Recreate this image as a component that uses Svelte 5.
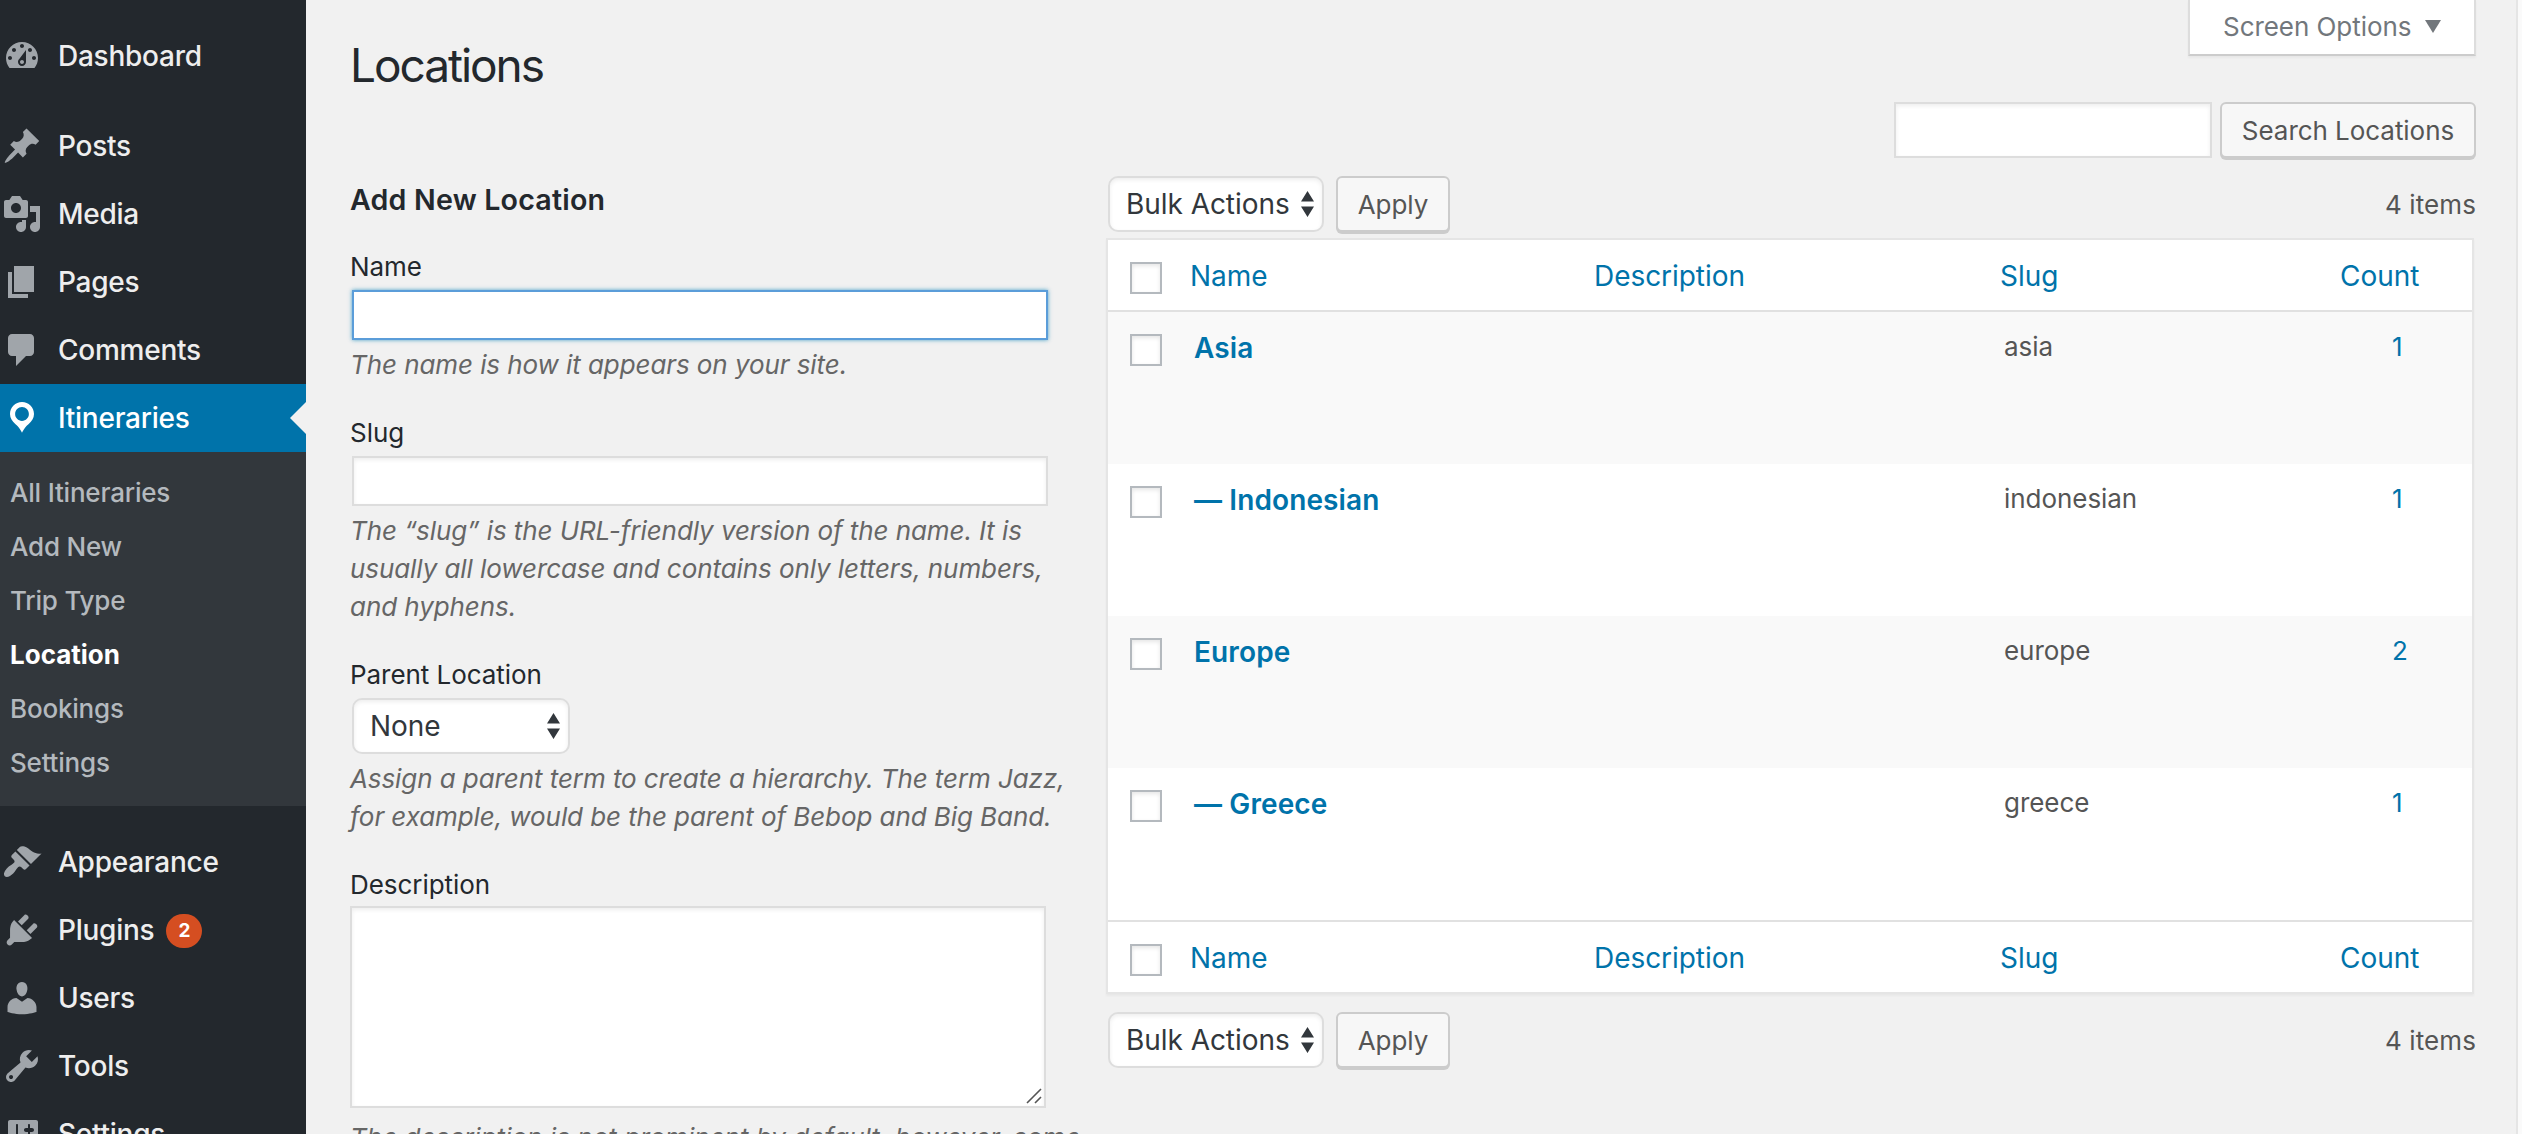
<script>
  const icons = {
    dashboard: 'M3.76 16h12.48c1.1-1.37 1.76-3.11 1.76-5 0-4.42-3.58-8-8-8s-8 3.58-8 8c0 1.89.66 3.63 1.76 5zM10 4c.55 0 1 .45 1 1s-.45 1-1 1-1-.45-1-1 .45-1 1-1zM6 6c.55 0 1 .45 1 1s-.45 1-1 1-1-.45-1-1 .45-1 1-1zm8 0c.55 0 1 .45 1 1s-.45 1-1 1-1-.45-1-1 .45-1 1-1zm-5.37 5.55L12 7v6c0 1.1-.9 2-2 2s-2-.9-2-2c0-.57.24-1.08.63-1.45zM4 10c.55 0 1 .45 1 1s-.45 1-1 1-1-.45-1-1 .45-1 1-1zm12 0c.55 0 1 .45 1 1s-.45 1-1 1-1-.45-1-1 .45-1 1-1zm-5 3c0-.55-.45-1-1-1s-1 .45-1 1 .45 1 1 1 1-.45 1-1z',
    post: 'M10.44 3.02l1.82-1.82 6.36 6.35-1.83 1.82c-1.05-.68-2.48-.57-3.41.36l-.75.75c-.92.93-1.04 2.35-.35 3.41l-1.83 1.82-2.41-2.41-2.8 2.79c-.42.42-3.38 2.71-3.8 2.29s1.86-3.39 2.28-3.81l2.79-2.79L4.1 9.36l1.83-1.82c1.05.69 2.48.57 3.4-.36l.75-.75c.93-.92 1.05-2.35.36-3.41z',
    media: 'M13 11V4c0-.55-.45-1-1-1h-1.67L9 1H5L3.67 3H2c-.55 0-1 .45-1 1v7c0 .55.45 1 1 1h10c.55 0 1-.45 1-1zM7 4.5c1.38 0 2.5 1.12 2.5 2.5S8.38 9.5 7 9.5 4.5 8.38 4.5 7 5.62 4.5 7 4.5zM14 6h5v10.5c0 1.38-1.12 2.5-2.5 2.5S14 17.88 14 16.5s1.12-2.5 2.5-2.5c.17 0 .34.02.5.05V9h-3V6zm-4 8.05V13h2v3.5c0 1.38-1.12 2.5-2.5 2.5S7 17.88 7 16.5 8.12 14 9.5 14c.17 0 .34.02.5.05z',
    page: 'M6 15V2h10v13H6zm-1 1h8v2H3V5h2v11z',
    comments: 'M5 2h9c1.1 0 2 .9 2 2v7c0 1.1-.9 2-2 2h-2l-5 5v-5H5c-1.1 0-2-.9-2-2V4c0-1.1.9-2 2-2z',
    location: 'M10 2C6.69 2 4 4.69 4 8c0 2.02 1.17 3.71 2.53 4.89.43.37 1.18.96 1.85 1.83.74.97 1.41 2.01 1.62 2.71.21-.7.88-1.74 1.62-2.71.67-.87 1.42-1.46 1.85-1.83C14.83 11.71 16 10.02 16 8c0-3.31-2.69-6-6-6zm0 2.56c1.9 0 3.44 1.54 3.44 3.44S11.9 11.44 10 11.44 6.56 9.9 6.56 8 8.1 4.56 10 4.56z',
    appearance: 'M14.48 11.06L7.41 3.99l1.5-1.5c.5-.56 2.3-.47 3.51.32 1.21.8 1.43 1.28 2.91 2.1 1.18.64 2.45 1.26 4.45.85zm-.71.71L6.7 4.7 4.93 6.47c-.39.39-.39 1.02 0 1.41l1.06 1.06c.39.39.39 1.03 0 1.42-.6.6-1.43 1.11-2.21 1.69-.35.26-.7.53-1.01.84C1.43 14.23.4 16.08 1.4 17.07c.99 1 2.84-.03 4.18-1.36.31-.31.58-.66.85-1.02.57-.78 1.08-1.61 1.69-2.21.39-.39 1.02-.39 1.41 0l1.06 1.06c.39.39 1.02.39 1.41 0z',
    plugins: 'M13.11 4.36L9.87 7.6 8 5.73l3.24-3.24c.35-.34 1.05-.2 1.56.32.52.51.66 1.21.31 1.55zm-8 1.77l.91-1.12 9.01 9.01-1.19.84c-.71.71-2.63 1.16-3.82 1.16H6.14L4.9 17.26c-.59.59-1.54.59-2.12 0-.59-.58-.59-1.53 0-2.12l1.24-1.24v-3.88c0-1.13.4-3.19 1.09-3.89zm7.26 3.97l3.24-3.24c.34-.35 1.04-.21 1.55.31.52.51.66 1.21.31 1.55l-3.24 3.25z',
    users: 'M10 9.25c-2.27 0-2.73-3.44-2.73-3.44C7 4.02 7.82 2 9.97 2c2.16 0 2.98 2.02 2.71 3.81 0 0-.41 3.44-2.68 3.44zm0 2.57L12.72 10c2.39 0 4.52 2.33 4.52 4.53v2.49s-3.65 1.13-7.24 1.13c-3.65 0-7.24-1.13-7.24-1.13v-2.49c0-2.25 1.94-4.48 4.47-4.48z',
    tools: 'M16.68 9.77c-1.34 1.34-3.3 1.67-4.95.99l-5.41 6.52c-.99.99-2.59.99-3.58 0s-.99-2.59 0-3.57l6.52-5.42c-.68-1.65-.35-3.61.99-4.95 1.28-1.28 3.12-1.62 4.72-1.06l-2.89 2.89 2.82 2.82 2.86-2.87c.53 1.58.18 3.39-1.08 4.65zM3.81 16.21c.4.39 1.04.39 1.43 0 .4-.4.4-1.04 0-1.43-.39-.4-1.03-.4-1.43 0-.39.39-.39 1.03 0 1.43z',
    settings: 'M18 16V4c0-.55-.45-1-1-1H4c-.55 0-1 .45-1 1v12c0 .55.45 1 1 1h13c.55 0 1-.45 1-1zM8 11h1c.55 0 1 .45 1 1s-.45 1-1 1H8v1.5c0 .28-.22.5-.5.5s-.5-.22-.5-.5V13H6c-.55 0-1-.45-1-1s.45-1 1-1h1V5.5c0-.28.22-.5.5-.5s.5.22.5.5V11zm6-2v5.5c0 .28-.22.5-.5.5s-.5-.22-.5-.5V9h-1c-.55 0-1-.45-1-1s.45-1 1-1h1V5.5c0-.28.22-.5.5-.5s.5.22.5.5V7h1c.55 0 1 .45 1 1s-.45 1-1 1h-1z'
  };

  const menu = [
    { label: 'Dashboard', icon: 'dashboard', gapAfter: true },
    { label: 'Posts', icon: 'post' },
    { label: 'Media', icon: 'media' },
    { label: 'Pages', icon: 'page' },
    { label: 'Comments', icon: 'comments' },
    {
      label: 'Itineraries',
      icon: 'location',
      current: true,
      gapAfter: true,
      children: ['All Itineraries', 'Add New', 'Trip Type', 'Location', 'Bookings', 'Settings']
    },
    { label: 'Appearance', icon: 'appearance' },
    { label: 'Plugins', icon: 'plugins', badge: 2 },
    { label: 'Users', icon: 'users' },
    { label: 'Tools', icon: 'tools' },
    { label: 'Settings', icon: 'settings' }
  ];

  const terms = [
    { name: 'Asia', slug: 'asia', count: 1 },
    { name: '— Indonesian', slug: 'indonesian', count: 1 },
    { name: 'Europe', slug: 'europe', count: 2 },
    { name: '— Greece', slug: 'greece', count: 1 }
  ];
</script>

{#snippet arrows()}
  <svg class="arrows" viewBox="0 0 13 26" aria-hidden="true">
    <path d="M6.5 0L13 10.5H0zM6.5 26L0 15.5h13z" />
  </svg>
{/snippet}

{#snippet tablenav()}
  <div class="tablenav">
    <div class="select bulk"><span>Bulk Actions</span>{@render arrows()}</div>
    <button class="button apply">Apply</button>
    <span class="items">4 items</span>
  </div>
{/snippet}

{#snippet headings()}
  <div class="row head">
    <div class="cell check"><span class="box"></span></div>
    <div class="cell"><a href="#name">Name</a></div>
    <div class="cell"><a href="#description">Description</a></div>
    <div class="cell"><a href="#slug">Slug</a></div>
    <div class="cell count"><a href="#count">Count</a></div>
  </div>
{/snippet}

<div class="admin">
  <nav class="sidebar">
    {#each menu as item}
      <a class="item" class:current={item.current} href="#menu">
        <svg class="icon" viewBox="0 0 20 20" aria-hidden="true"><path fill-rule="evenodd" d={icons[item.icon]} /></svg>
        <span>{item.label}</span>
        {#if item.badge}<span class="badge">{item.badge}</span>{/if}
      </a>
      {#if item.children}
        <div class="submenu">
          {#each item.children as child}
            <a class:active={child === 'Location'} href="#submenu">{child}</a>
          {/each}
        </div>
      {/if}
      {#if item.gapAfter}<div class="separator"></div>{/if}
    {/each}
  </nav>

  <main>
    <header>
      <h1>Locations</h1>
      <div class="tools">
        <button class="screen-options"><span>Screen Options</span>
          <svg viewBox="0 0 16 13" aria-hidden="true"><path d="M0 0h16L8 13z" /></svg>
        </button>
        <div class="search">
          <input type="text" aria-label="Search Locations" />
          <button class="button">Search Locations</button>
        </div>
      </div>
    </header>

    <div class="columns">
      <section class="form">
        <h2>Add New Location</h2>
        <div class="field first">
          <label for="tag-name">Name</label>
          <input id="tag-name" class="focused" type="text" />
          <p>The name is how it appears on your site.</p>
        </div>
        <div class="field">
          <label for="tag-slug">Slug</label>
          <input id="tag-slug" type="text" />
          <p>The “slug” is the URL-friendly version of the name. It is<br />usually all lowercase and contains only letters, numbers,<br />and hyphens.</p>
        </div>
        <div class="field parent">
          <span class="label">Parent Location</span>
          <div class="select"><span>None</span>{@render arrows()}</div>
          <p>Assign a parent term to create a hierarchy. The term Jazz,<br />for example, would be the parent of Bebop and Big Band.</p>
        </div>
        <div class="field description">
          <span class="label">Description</span>
          <div class="textarea">
            <svg viewBox="0 0 16 16" aria-hidden="true"><path d="M1 15L15 1M9 15l6-6" /></svg>
          </div>
          <p>The description is not prominent by default; however, some</p>
        </div>
      </section>

      <section class="list">
        {@render tablenav()}
        <div class="table">
          {@render headings()}
          <div class="body">
            {#each terms as term}
              <div class="row term">
                <div class="cell check"><span class="box"></span></div>
                <div class="cell name"><a href="#term">{term.name}</a></div>
                <div class="cell"></div>
                <div class="cell slug">{term.slug}</div>
                <div class="cell posts"><a href="#posts">{term.count}</a></div>
              </div>
            {/each}
          </div>
          {@render headings()}
        </div>
        {@render tablenav()}
      </section>
    </div>
  </main>
  <div class="edge"></div>
</div>

<style>
  :global(body) {
    margin: 0;
    overflow: hidden;
  }

  .admin {
    display: flex;
    width: 2522px;
    height: 1134px;
    overflow: hidden;
    background: #f1f1f1;
    color: #555;
    font-family: Inter, 'Liberation Sans', sans-serif;
    font-size: 26px;
    font-weight: 400;
    line-height: 38px;
    letter-spacing: -0.05px;
  }

  .admin * {
    box-sizing: border-box;
  }

  a {
    color: #0073aa;
    text-decoration: none;
  }

  /* Sidebar */
  .sidebar {
    flex: none;
    width: 306px;
    padding-top: 22px;
    background: #23282d;
    font-weight: 450;
    letter-spacing: -0.2px;
  }

  .item {
    position: relative;
    display: flex;
    align-items: center;
    height: 68px;
    padding-left: 2px;
    color: #eee;
    font-size: 28px;
    letter-spacing: -0.25px;
  }

  .icon {
    flex: none;
    width: 40px;
    height: 40px;
    margin-right: 16px;
    fill: #a0a5aa;
  }

  .item.current {
    background: #0073aa;
    color: #fff;
  }

  .item.current .icon {
    fill: #fff;
  }

  .item.current::after {
    content: '';
    position: absolute;
    right: 0;
    top: 18px;
    border: 16px solid transparent;
    border-left-width: 0;
    border-right-color: #f1f1f1;
  }

  .badge {
    display: flex;
    align-items: center;
    justify-content: center;
    width: 36px;
    height: 34px;
    margin: 2px 0 0 12px;
    border-radius: 17px;
    background: #d54e21;
    color: #fff;
    font-size: 19px;
    font-weight: 700;
  }

  .separator {
    height: 22px;
  }

  .submenu {
    display: flex;
    flex-direction: column;
    height: 354px;
    padding: 14px 0 0 10px;
    background: #32373c;
  }

  .submenu a {
    height: 54px;
    color: #b4b9be;
    line-height: 54px;
  }

  .submenu .active {
    color: #fff;
    font-weight: 650;
    letter-spacing: 0;
  }

  /* Page header */
  main {
    flex: none;
    width: 2170px;
    padding-left: 44px;
  }

  header {
    display: flex;
    justify-content: space-between;
    height: 176px;
  }

  h1 {
    margin: 0;
    padding-top: 35px;
    color: #23282d;
    font-size: 46px;
    font-weight: 400;
    line-height: 60px;
    letter-spacing: -2.05px;
  }

  .tools {
    display: flex;
    flex-direction: column;
    align-items: flex-end;
  }

  .screen-options {
    display: flex;
    align-items: center;
    width: 288px;
    height: 56px;
    padding: 0 0 0 33px;
    border: 2px solid #ddd;
    border-top: 0;
    border-bottom-color: #ccc;
    background: #fff;
    box-shadow: 0 2px 2px rgba(0, 0, 0, 0.04);
    color: #72777c;
    font: inherit;
    letter-spacing: inherit;
  }

  .screen-options svg {
    width: 16px;
    height: 13px;
    margin: -2px 0 0 14px;
    fill: #72777c;
  }

  .search {
    display: flex;
    gap: 8px;
    margin-top: 46px;
  }

  input {
    display: block;
    width: 318px;
    height: 56px;
    padding: 0 10px;
    border: 2px solid #ddd;
    border-radius: 0;
    outline: 0;
    background: #fff;
    box-shadow: inset 0 2px 4px rgba(0, 0, 0, 0.07);
  }

  .button {
    width: 256px;
    height: 56px;
    padding: 1px 0 0;
    border: 2px solid #ccc;
    border-radius: 6px;
    background: #f7f7f7;
    box-shadow: 0 2px 0 #ccc;
    color: #555;
    font: inherit;
    letter-spacing: inherit;
  }

  .columns {
    display: flex;
  }

  /* Add form */
  .form {
    flex: none;
    width: 756px;
  }

  h2 {
    margin: 0;
    padding-top: 5px;
    color: #23282d;
    font-size: 28.6px;
    font-weight: 600;
    line-height: 38px;
    letter-spacing: 0.2px;
  }

  .field {
    display: flex;
    flex-direction: column;
    margin-top: 30px;
  }

  .field.first {
    margin-top: 29px;
  }

  label,
  .label {
    height: 42px;
    color: #23282d;
  }

  .description .label {
    height: 40px;
  }

  .field input {
    width: 696px;
    height: 50px;
    margin-left: 2px;
  }

  .field input.focused {
    border-color: #5b9dd9;
    box-shadow: 0 0 4px rgba(30, 140, 190, 0.8);
  }

  .field p {
    margin: 6px 0 0;
    color: #666;
    font-style: italic;
    font-weight: 450;
    letter-spacing: -0.08px;
    white-space: nowrap;
  }

  .field.description p {
    margin-top: 11px;
    letter-spacing: 0.02px;
  }

  .select {
    display: flex;
    align-items: center;
    justify-content: space-between;
    width: 218px;
    height: 56px;
    margin-left: 2px;
    padding: 0 8px 0 16px;
    border: 2px solid #ddd;
    border-radius: 10px;
    background: #fff;
    box-shadow: inset 0 2px 4px rgba(0, 0, 0, 0.07);
    color: #32373c;
    font-size: 28px;
    letter-spacing: -0.05px;
  }

  .arrows {
    width: 13px;
    height: 26px;
    fill: #32373c;
  }

  .textarea {
    display: flex;
    align-items: flex-end;
    justify-content: flex-end;
    width: 696px;
    height: 202px;
    padding: 2px;
    border: 2px solid #ddd;
    background: #fff;
    box-shadow: inset 0 2px 4px rgba(0, 0, 0, 0.07);
  }

  .textarea svg {
    width: 16px;
    height: 16px;
    fill: none;
    stroke: #555;
    stroke-width: 1.6;
  }

  /* Term list */
  .list {
    width: 1370px;
  }

  .tablenav {
    display: flex;
    align-items: flex-start;
    height: 62px;
  }

  .tablenav .select {
    width: 216px;
    margin-right: 12px;
  }

  .button.apply {
    width: 114px;
  }

  .items {
    margin: 10px 0 0 auto;
    letter-spacing: 0.1px;
  }

  .table {
    width: 1368px;
    border: 2px solid #e5e5e5;
    background: #fff;
    box-shadow: 0 2px 2px rgba(0, 0, 0, 0.04);
  }

  .table + .tablenav {
    margin-top: 18px;
  }

  .row {
    display: grid;
    grid-template-columns: 82px 404px 406px 340px 1fr;
  }

  .head {
    height: 70px;
    font-size: 28px;
  }

  .head .cell {
    padding-top: 17px;
  }

  .body {
    border: solid #e1e1e1;
    border-width: 2px 0;
  }

  .term {
    height: 152px;
  }

  .term:nth-child(odd) {
    background: #f9f9f9;
  }

  .term .cell {
    padding-top: 16px;
  }

  .row .cell.check {
    padding: 22px 0 0 22px;
  }

  .box {
    display: block;
    width: 32px;
    height: 32px;
    border: 2px solid #b4b9be;
    background: #fff;
    box-shadow: inset 0 2px 4px rgba(0, 0, 0, 0.1);
  }

  .term .cell.name {
    padding: 17px 0 0 4px;
    font-size: 28px;
    font-weight: 600;
    letter-spacing: 0.12px;
  }

  .term .cell.slug {
    padding-left: 4px;
  }

  .term .cell.posts {
    padding-left: 52px;
  }

  .edge {
    width: 6px;
    margin-left: 40px;
    border-left: 2px solid #e5e5e5;
    background: #fafafa;
  }
</style>
